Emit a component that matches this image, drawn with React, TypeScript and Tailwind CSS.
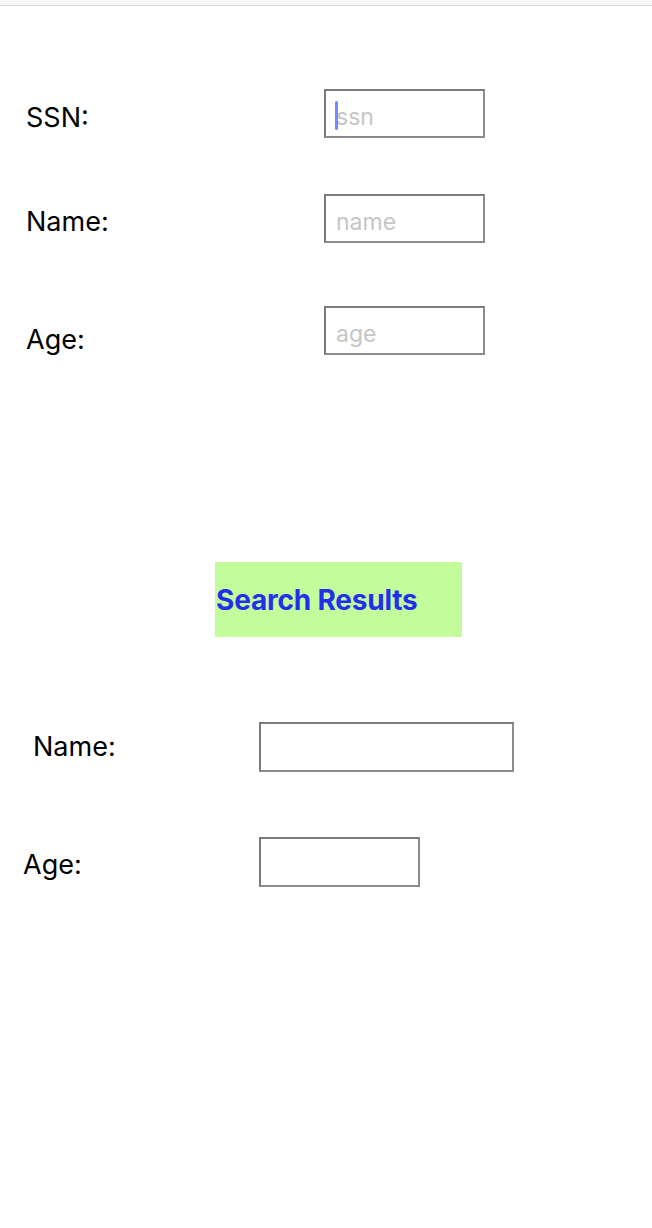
const font = "font-['Inter','Liberation_Sans',sans-serif]";

function Field({ placeholder, width, height, caret }: { placeholder?: string; width: string; height: string; caret?: boolean }) {
  return (
    <div className={`relative ${width} ${height} shrink-0`}>
      <input
        placeholder={placeholder}
        className={`w-full h-full border-2 border-[#8c8c8c] border-t-[#7a7a7a] border-l-[#7a7a7a] bg-white px-[10px] pt-[6px] text-[23px] text-black placeholder:text-[#c5c5c5] outline-none ${font}`}
      />
      {caret && <span className="absolute left-[11px] top-[12px] w-[3px] h-[29px] rounded-full bg-[#6d8bfc]" />}
    </div>
  );
}

export default function App() {
  return (
    <div className={`min-h-[1228px] bg-white text-black ${font}`}>
      <div className="h-[6px] bg-[#f7f7f7] border-b border-[#d9d9d9]" />

      <div className="pt-[83px] flex flex-col">
        <div className="flex items-center h-[49px]">
          <span className="w-[324px] pl-[26px] text-[27px] translate-y-[5px]">SSN:</span>
          <Field placeholder="ssn" width="w-[161px]" height="h-[49px]" caret />
        </div>
        <div className="flex items-center h-[49px] mt-[56px]">
          <span className="w-[324px] pl-[26px] text-[27px] translate-y-[4px]">Name:</span>
          <Field placeholder="name" width="w-[161px]" height="h-[49px]" />
        </div>
        <div className="flex items-center h-[49px] mt-[63px]">
          <span className="w-[324px] pl-[26px] text-[27px] translate-y-[10px]">Age:</span>
          <Field placeholder="age" width="w-[161px]" height="h-[49px]" />
        </div>
      </div>

      <div className="mt-[207px] ml-[215px] w-[247px] h-[75px] bg-[#c2fc9b] flex items-center">
        <span className="pl-[1px] text-[28px] font-bold text-[#2230ee] tracking-[-0.2px]">Search Results</span>
      </div>

      <div className="flex items-center h-[50px] mt-[85px]">
        <span className="w-[259px] pl-[33px] text-[27px]">Name:</span>
        <Field width="w-[255px]" height="h-[50px]" />
      </div>
      <div className="flex items-center h-[50px] mt-[65px]">
        <span className="w-[259px] pl-[23px] text-[27px] translate-y-[3px]">Age:</span>
        <Field width="w-[161px]" height="h-[50px]" />
      </div>
    </div>
  );
}
